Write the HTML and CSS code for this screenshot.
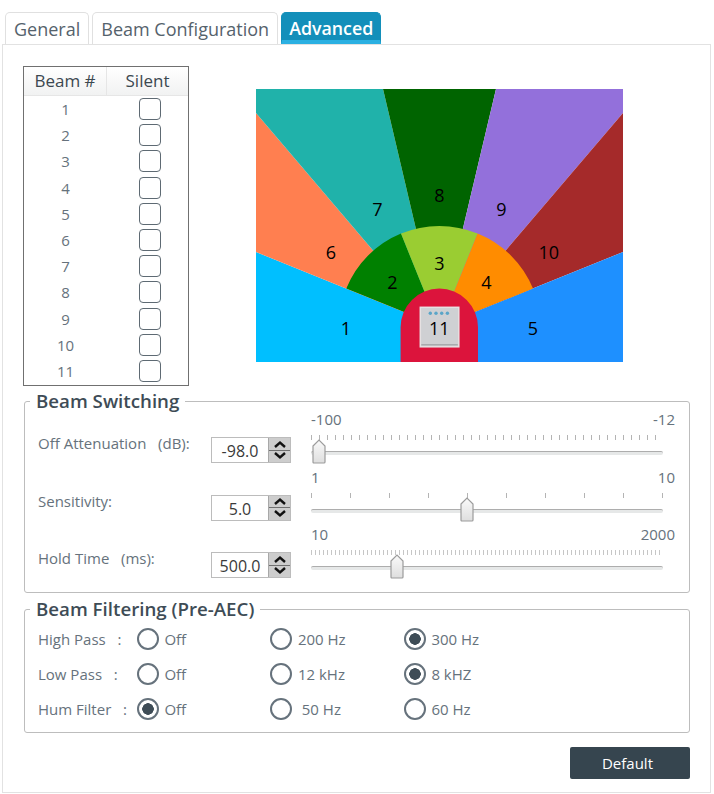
FILE: index.html
```html
<!DOCTYPE html>
<html lang="en">

<head>
  <meta charset="UTF-8">
  <meta name="viewport" content="width=device-width, initial-scale=1.0">
  <title>Beam Settings</title>
  <link rel="stylesheet" href="styles.css">
</head>

<body>
  <div class="tabs">
    <div class="tab">General</div>
    <div class="tab">Beam Configuration</div>
    <div class="tab tab-active">Advanced</div>
  </div>

  <div class="panel">
    <div class="top-row">
      <div class="beam-table">
        <div class="head head-first">Beam #</div>
        <div class="head">Silent</div>
        <div class="num">1</div><div class="check"><input type="checkbox"></div>
        <div class="num">2</div><div class="check"><input type="checkbox"></div>
        <div class="num">3</div><div class="check"><input type="checkbox"></div>
        <div class="num">4</div><div class="check"><input type="checkbox"></div>
        <div class="num">5</div><div class="check"><input type="checkbox"></div>
        <div class="num">6</div><div class="check"><input type="checkbox"></div>
        <div class="num">7</div><div class="check"><input type="checkbox"></div>
        <div class="num">8</div><div class="check"><input type="checkbox"></div>
        <div class="num">9</div><div class="check"><input type="checkbox"></div>
        <div class="num">10</div><div class="check"><input type="checkbox"></div>
        <div class="num">11</div><div class="check"><input type="checkbox"></div>
      </div>

      <svg class="beam-map" width="367" height="273" viewBox="255.7 88.7 367 273">
        <polygon fill="#00bfff" points="255.7,251.7 439,326 439,361.7 255.7,361.7" />
        <polygon fill="#ff7f50" points="255.7,112.7 439,328 439,326 255.7,251.7" />
        <polygon fill="#20b2aa" points="255.7,88.7 382.7,88.7 439,328 255.7,112.7" />
        <polygon fill="#006400" points="382.7,88.7 495.7,88.7 439,328" />
        <polygon fill="#9370db" points="495.7,88.7 622.7,88.7 622.7,112.7 439,328" />
        <polygon fill="#a52a2a" points="622.7,112.7 622.7,251.7 439,326 439,328" />
        <polygon fill="#1e90ff" points="622.7,251.7 622.7,361.7 439,361.7 439,326" />
        <path fill="#008000" d="M346 288.3A100 100 0 0 1 400.7 233.3L439 328L439 326Z" />
        <path fill="#9acd32" d="M400.7 233.3A100 100 0 0 1 477.3 233.3L439 328Z" />
        <path fill="#ff8c00" d="M477.3 233.3A100 100 0 0 1 532.7 288.3L439 326L439 328Z" />
        <path fill="#dc143c" d="M400.3 361.7V327A38.7 38.7 0 0 1 477.7 327V361.7Z" />
        <rect x="420" y="307" width="38.5" height="39.5" fill="#cfd0d3" stroke="#e6e1e2" stroke-width="1.5" />
        <path d="M421 344.5H457.5" stroke="#a9aaad" stroke-width="1.5" />
        <g fill="#5aa5c8">
          <circle cx="430" cy="313" r="1.7" />
          <circle cx="435.7" cy="313" r="1.7" />
          <circle cx="441.4" cy="313" r="1.7" />
          <circle cx="447.1" cy="313" r="1.7" />
        </g>
        <g class="beam-labels">
          <text x="345.5" y="328">1</text>
          <text x="392" y="282">2</text>
          <text x="439" y="263">3</text>
          <text x="486" y="282">4</text>
          <text x="532.5" y="328">5</text>
          <text x="330.5" y="252">6</text>
          <text x="377" y="209">7</text>
          <text x="439" y="195">8</text>
          <text x="501" y="209">9</text>
          <text x="548.5" y="252">10</text>
          <text x="439" y="328">11</text>
        </g>
      </svg>
    </div>

    <div class="group group-switching">
      <h3 class="group-title">Beam Switching</h3>

      <div class="switch-row">
        <div class="switch-label">Off Attenuation&nbsp;&nbsp; (dB):</div>
        <div class="spin">
          <input class="spin-value" type="text" value="-98.0" readonly>
          <div class="spin-buttons">
            <div class="spin-btn"><svg width="12" height="8" viewBox="0 0 12 8"><path d="M1 7L6 2.5L11 7" /></svg></div>
            <div class="spin-btn"><svg width="12" height="8" viewBox="0 0 12 8"><path d="M1 1L6 5.5L11 1" /></svg></div>
          </div>
        </div>
        <div class="slider-box">
          <div class="scale"><span>-100</span><span>-12</span></div>
          <div class="slider">
            <div class="ticks ticks-mid"></div>
            <div class="track"></div>
            <svg class="thumb" style="left: 1px" width="14" height="25" viewBox="0 0 14 25">
              <defs>
                <linearGradient id="thumbFill" x1="0" y1="0" x2="0" y2="1">
                  <stop offset="0" stop-color="#fafafa" />
                  <stop offset="1" stop-color="#dedede" />
                </linearGradient>
              </defs>
              <path fill="url(#thumbFill)" d="M1 7L7 1L13 7V23Q13 24 12 24H2Q1 24 1 23Z" />
            </svg>
          </div>
        </div>
      </div>

      <div class="switch-row">
        <div class="switch-label">Sensitivity:</div>
        <div class="spin">
          <input class="spin-value" type="text" value="5.0" readonly>
          <div class="spin-buttons">
            <div class="spin-btn"><svg width="12" height="8" viewBox="0 0 12 8"><path d="M1 7L6 2.5L11 7" /></svg></div>
            <div class="spin-btn"><svg width="12" height="8" viewBox="0 0 12 8"><path d="M1 1L6 5.5L11 1" /></svg></div>
          </div>
        </div>
        <div class="slider-box">
          <div class="scale"><span>1</span><span>10</span></div>
          <div class="slider">
            <div class="ticks ticks-wide"></div>
            <div class="track"></div>
            <svg class="thumb" style="left: 149px" width="14" height="25" viewBox="0 0 14 25">
              <path fill="url(#thumbFill)" d="M1 7L7 1L13 7V23Q13 24 12 24H2Q1 24 1 23Z" />
            </svg>
          </div>
        </div>
      </div>

      <div class="switch-row">
        <div class="switch-label">Hold Time&nbsp;&nbsp; (ms):</div>
        <div class="spin">
          <input class="spin-value" type="text" value="500.0" readonly>
          <div class="spin-buttons">
            <div class="spin-btn"><svg width="12" height="8" viewBox="0 0 12 8"><path d="M1 7L6 2.5L11 7" /></svg></div>
            <div class="spin-btn"><svg width="12" height="8" viewBox="0 0 12 8"><path d="M1 1L6 5.5L11 1" /></svg></div>
          </div>
        </div>
        <div class="slider-box">
          <div class="scale"><span>10</span><span>2000</span></div>
          <div class="slider">
            <div class="ticks ticks-fine"></div>
            <div class="track"></div>
            <svg class="thumb" style="left: 79px" width="14" height="25" viewBox="0 0 14 25">
              <path fill="url(#thumbFill)" d="M1 7L7 1L13 7V23Q13 24 12 24H2Q1 24 1 23Z" />
            </svg>
          </div>
        </div>
      </div>
    </div>

    <div class="group group-filtering">
      <h3 class="group-title">Beam Filtering (Pre-AEC)</h3>

      <div class="filter-row">
        <div class="filter-label">High Pass&nbsp;&nbsp; :</div>
        <label class="option"><input type="radio" name="high"> Off</label>
        <label class="option"><input type="radio" name="high"> 200 Hz</label>
        <label class="option"><input type="radio" name="high" checked> 300 Hz</label>
      </div>
      <div class="filter-row">
        <div class="filter-label">Low Pass&nbsp;&nbsp; :</div>
        <label class="option"><input type="radio" name="low"> Off</label>
        <label class="option"><input type="radio" name="low"> 12 kHz</label>
        <label class="option"><input type="radio" name="low" checked> 8 kHZ</label>
      </div>
      <div class="filter-row">
        <div class="filter-label">Hum Filter&nbsp;&nbsp; :</div>
        <label class="option"><input type="radio" name="hum" checked> Off</label>
        <label class="option"><input type="radio" name="hum"> &nbsp;50 Hz</label>
        <label class="option"><input type="radio" name="hum"> 60 Hz</label>
      </div>
    </div>

    <div class="actions">
      <button class="btn-default" type="button">Default</button>
    </div>
  </div>
</body>

</html>
```

FILE: styles.css
```css
body {
  font-family: "Open Sans", "Noto Sans", sans-serif;
  font-size: 15px;
  color: #66727c;
  background-color: #fff;
  margin: 0;
  padding: 0;
}

.tabs {
  display: flex;
  gap: 3px;
  padding: 12px 0 0 5px;
}

.tab {
  box-sizing: border-box;
  height: 32px;
  line-height: 32px;
  padding: 0 8px;
  font-size: 18px;
  color: #55626c;
  border: 1px solid #e0e0e0;
  border-bottom: none;
  border-radius: 5px 5px 0 0;
}

.tab-active {
  padding: 0 7px;
  font-size: 17.8px;
  color: #fff;
  font-weight: 600;
  background-color: #138fba;
  border-color: #138fba;
  border-bottom: 4px solid #2bb0e2;
  line-height: 31px;
}

.panel {
  box-sizing: border-box;
  width: 709px;
  height: 749px;
  margin-left: 2px;
  padding: 21px 20px 0 21px;
  border: 1px solid #e2e2e2;
}

.top-row {
  display: flex;
}

.beam-table {
  box-sizing: border-box;
  width: 166px;
  height: 320px;
  margin-left: -1px;
  border: 1px solid #707070;
  display: grid;
  grid-template-columns: 83px 1fr;
  grid-template-rows: 29px;
  grid-auto-rows: 26.2px;
}

.head {
  font-size: 17px;
  line-height: 28px;
  text-align: center;
  color: #3c4850;
  background: linear-gradient(#fff, #f1f2f2);
  border-bottom: 1px solid #e6e6e6;
}

.head-first {
  border-right: 1px solid #e6e6e6;
}

.num {
  text-align: center;
  line-height: 26px;
}

.check {
  display: flex;
  justify-content: center;
  align-items: center;
  padding-left: 5px;
}

.check input {
  appearance: none;
  box-sizing: border-box;
  width: 22px;
  height: 22px;
  margin: 0;
  border: 1.5px solid #5e6a73;
  border-radius: 4px;
  background-color: #fff;
}

.beam-map {
  display: block;
  margin: 22.7px 0 0 66.7px;
}

.beam-labels text {
  font-size: 18px;
  fill: #000;
  text-anchor: middle;
  dominant-baseline: central;
}

.group {
  position: relative;
  box-sizing: border-box;
  width: 666px;
  border: 1px solid #bdbdbd;
  border-radius: 3px;
  padding-left: 13px;
}

.group-switching {
  height: 192px;
  margin-top: 15px;
  padding-top: 7px;
}

.group-filtering {
  height: 124px;
  margin-top: 16px;
  padding-top: 12px;
}

.group-title {
  position: absolute;
  top: -13px;
  left: 5px;
  margin: 0;
  padding: 0 6px;
  font-size: 18.7px;
  font-weight: 600;
  line-height: 24px;
  color: #3e4c56;
  background-color: #fff;
}

.switch-row {
  display: grid;
  grid-template-columns: 173px 80px 364px;
  height: 57.6px;
}

.switch-label {
  padding-top: 24px;
  line-height: 20px;
}

.spin {
  display: flex;
  box-sizing: border-box;
  width: 80px;
  height: 26px;
  margin-top: 28px;
  border: 1px solid #bcbcbc;
}

.spin-value {
  box-sizing: border-box;
  width: 56px;
  height: 24px;
  padding: 2px 0 0;
  border: none;
  outline: none;
  font-family: inherit;
  font-size: 16px;
  color: #3a3a3a;
  text-align: center;
}

.spin-buttons {
  flex: 1;
  display: flex;
  flex-direction: column;
  gap: 1px;
  background-color: #6f6f6f;
  border-left: 1px solid #a8a8a8;
}

.spin-btn {
  flex: 1;
  display: flex;
  justify-content: center;
  align-items: center;
  background-color: #cdcdcd;
}

.spin-btn path {
  fill: none;
  stroke: #111;
  stroke-width: 2.4;
}

.slider-box {
  margin-left: 20px;
  width: 364px;
}

.scale {
  display: flex;
  justify-content: space-between;
  height: 20px;
  line-height: 20px;
  color: #66727c;
}

.slider {
  position: relative;
  width: 352px;
}

.ticks {
  height: 5px;
  margin-top: 6px;
}

.ticks-mid {
  background: repeating-linear-gradient(to right, #b4b4b4 0 1px, transparent 1px 8px);
}

.ticks-wide {
  background: repeating-linear-gradient(to right, #b4b4b4 0 1px, transparent 1px 39px);
}

.ticks-fine {
  background: repeating-linear-gradient(to right, #c6c6c6 0 1px, transparent 1px 4px);
}

.track {
  height: 3px;
  margin-top: 11px;
  background-color: #e6e8e8;
  border-top: 1px solid #adadad;
  border-radius: 2px;
}

.thumb {
  position: absolute;
  top: 4px;
}

.thumb path {
  stroke: #9c9c9c;
  stroke-width: 1.2;
}

.filter-row {
  display: grid;
  grid-template-columns: 98.5px 133.5px 133.5px 133.5px;
  align-items: center;
  height: 34.7px;
}

.filter-label {
  white-space: nowrap;
}

.option {
  display: flex;
  align-items: center;
  gap: 2px;
  white-space: pre;
}

.option input {
  appearance: none;
  box-sizing: border-box;
  width: 22px;
  height: 22px;
  margin: 0;
  border: 2px solid #66727c;
  border-radius: 50%;
  background-color: #fff;
}

.option input:checked {
  background: radial-gradient(circle, #3e4c56 0 5.5px, #fff 6px);
}

.actions {
  display: flex;
  justify-content: flex-end;
  margin-top: 14px;
}

.btn-default {
  width: 120px;
  height: 32px;
  padding: 0 5px 0 0;
  border: none;
  border-radius: 2px;
  font-family: inherit;
  font-size: 15px;
  color: #fff;
  background-color: #36454f;
}
```
